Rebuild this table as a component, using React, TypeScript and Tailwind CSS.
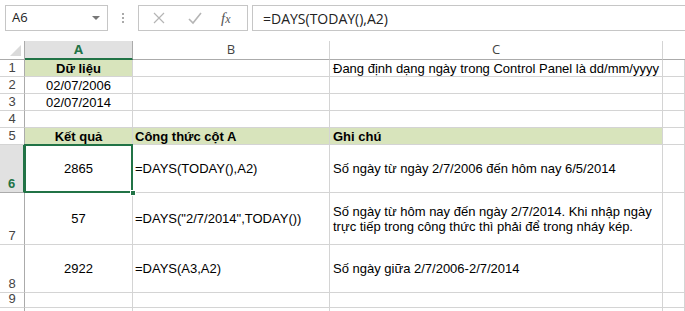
import React from "react";

const grid = "border-r border-b border-[#d4d4d4]";
const green = "bg-[#d8e4bc]";

const RowHead = ({ n, h, active }: { n?: number; h: string; active?: boolean }) => (
  <div
    className={`${h} flex items-end justify-center pb-[1px] text-[13px] leading-[15px] border-b ${
      active
        ? "bg-[#e1e1e1] text-[#217346] font-bold border-r-2 border-r-[#217346] border-b-[#ababab]"
        : "text-[#444] border-r border-r-[#ababab] border-b-[#d4d4d4]"
    }`}
  >
    {n}
  </div>
);

const Cell = ({ className = "", children }: { className?: string; children?: React.ReactNode }) => (
  <div className={`${grid} flex items-center text-[13px] leading-[15px] text-black ${className}`}>{children}</div>
);

export default function App() {
  return (
    <div className="w-[685px] h-[311px] overflow-hidden bg-white" style={{ fontFamily: "'Liberation Sans', Arial, sans-serif" }}>
      {/* formula bar */}
      <div className="h-[41px] flex items-start pt-[5px] pl-[5px]">
        <div className="w-[103px] h-[26px] border border-[#c6c6c6] flex items-center justify-between px-[6px] text-[13px] text-[#222]" style={{ fontFamily: "'Open Sans', sans-serif" }}>
          <span>A6</span>
          <span className="w-0 h-0 border-l-[4px] border-r-[4px] border-t-[4px] border-l-transparent border-r-transparent border-t-[#777] mr-[1px]" />
        </div>
        <div className="w-[30px] h-[26px] flex flex-col items-center justify-center gap-[2px]">
          <span className="w-[2px] h-[2px] bg-[#aaa]" />
          <span className="w-[2px] h-[2px] bg-[#aaa]" />
          <span className="w-[2px] h-[2px] bg-[#aaa]" />
        </div>
        <div className="w-[110px] h-[26px] border border-[#c6c6c6] flex items-center">
          <svg width="36" height="24" viewBox="0 0 36 24" className="ml-[2px]">
            <path d="M13 7 L23 17 M23 7 L13 17" stroke="#b5b5b5" strokeWidth="1.2" />
          </svg>
          <svg width="36" height="24" viewBox="0 0 36 24">
            <path d="M12 13 L16 17 L24 7" stroke="#b5b5b5" strokeWidth="1.6" fill="none" />
          </svg>
          <span className="ml-[8px] text-[15px] italic text-[#555]" style={{ fontFamily: "'Liberation Serif', serif" }}>
            f<span className="text-[12px]">x</span>
          </span>
        </div>
        <div className="flex-1 ml-[4px] h-[26px] border-y border-l border-[#c6c6c6] flex items-center pl-[10px] text-[14px] text-[#222]" style={{ fontFamily: "'Open Sans', sans-serif" }}>
          =DAYS(TODAY(),A2)
        </div>
      </div>

      {/* sheet */}
      <div className="grid grid-cols-[25px_108px_197px_333px_1fr]">
        {/* column headers */}
        <div className="h-[19px] border-r border-b border-[#ababab] flex items-end justify-end p-[3px]">
          <svg width="11" height="11" viewBox="0 0 11 11">
            <path d="M11 0 L11 11 L0 11 Z" fill="#dadada" />
          </svg>
        </div>
        <div className="h-[19px] bg-[#e1e1e1] border-r border-r-[#ababab] border-b-2 border-b-[#217346] flex items-center justify-center text-[13px] font-bold text-[#217346]" style={{ fontFamily: "'Open Sans', sans-serif" }}>A</div>
        <div className="h-[19px] border-r border-r-[#d4d4d4] border-b border-b-[#ababab] flex items-center justify-center text-[13px] text-[#444]" style={{ fontFamily: "'Open Sans', sans-serif" }}>B</div>
        <div className="h-[19px] border-r border-r-[#d4d4d4] border-b border-b-[#ababab] flex items-center justify-center text-[13px] text-[#444]" style={{ fontFamily: "'Open Sans', sans-serif" }}>C</div>
        <div className="h-[19px] border-b border-b-[#ababab]" />

        {/* row 1 */}
        <RowHead n={1} h="h-[17px]" />
        <Cell className={`${green} justify-center font-bold`}>Dữ liệu</Cell>
        <Cell />
        <Cell className="pl-[3px]">Đang định dạng ngày trong Control Panel là dd/mm/yyyy</Cell>
        <Cell />

        {/* row 2 */}
        <RowHead n={2} h="h-[17px]" />
        <Cell className="justify-center">02/07/2006</Cell>
        <Cell />
        <Cell />
        <Cell />

        {/* row 3 */}
        <RowHead n={3} h="h-[17px]" />
        <Cell className="justify-center">02/07/2014</Cell>
        <Cell />
        <Cell />
        <Cell />

        {/* row 4 */}
        <RowHead n={4} h="h-[17px]" />
        <Cell />
        <Cell />
        <Cell />
        <Cell />

        {/* row 5 */}
        <RowHead n={5} h="h-[17px]" />
        <Cell className={`${green} justify-center font-bold`}>Kết quả</Cell>
        <Cell className={`${green} pl-[2px] font-bold`}>Công thức cột A</Cell>
        <Cell className={`${green} pl-[3px] font-bold`}>Ghi chú</Cell>
        <Cell />

        {/* row 6 */}
        <RowHead n={6} h="h-[48px]" active />
        <Cell className="justify-center relative">
          2865
          <div className="absolute -top-[1px] -left-[1px] -right-[1px] -bottom-[1px] border-2 border-[#217346]" />
          <div className="absolute -right-[4px] -bottom-[4px] w-[6px] h-[6px] bg-[#217346] border border-white" />
        </Cell>
        <Cell className="pl-[2px]">=DAYS(TODAY(),A2)</Cell>
        <Cell className="pl-[3px]">Số ngày từ ngày 2/7/2006 đến hôm nay 6/5/2014</Cell>
        <Cell />

        {/* row 7 */}
        <RowHead n={7} h="h-[52px]" />
        <Cell className="justify-center">57</Cell>
        <Cell className="pl-[2px]">=DAYS("2/7/2014",TODAY())</Cell>
        <Cell className="pl-[3px]">
          <span>
            Số ngày từ hôm nay đến ngày 2/7/2014. Khi nhập ngày
            <br />
            trực tiếp trong công thức thì phải để trong nháy kép.
          </span>
        </Cell>
        <Cell />

        {/* row 8 */}
        <RowHead n={8} h="h-[48px]" />
        <Cell className="justify-center">2922</Cell>
        <Cell className="pl-[2px]">=DAYS(A3,A2)</Cell>
        <Cell className="pl-[3px]">Số ngày giữa 2/7/2006-2/7/2014</Cell>
        <Cell />

        {/* row 9 */}
        <RowHead n={9} h="h-[15px]" />
        <Cell />
        <Cell />
        <Cell />
        <Cell />

        {/* row 10, only its top edge shows */}
        <RowHead h="h-[17px]" />
        <Cell />
        <Cell />
        <Cell />
        <Cell />
      </div>
    </div>
  );
}
